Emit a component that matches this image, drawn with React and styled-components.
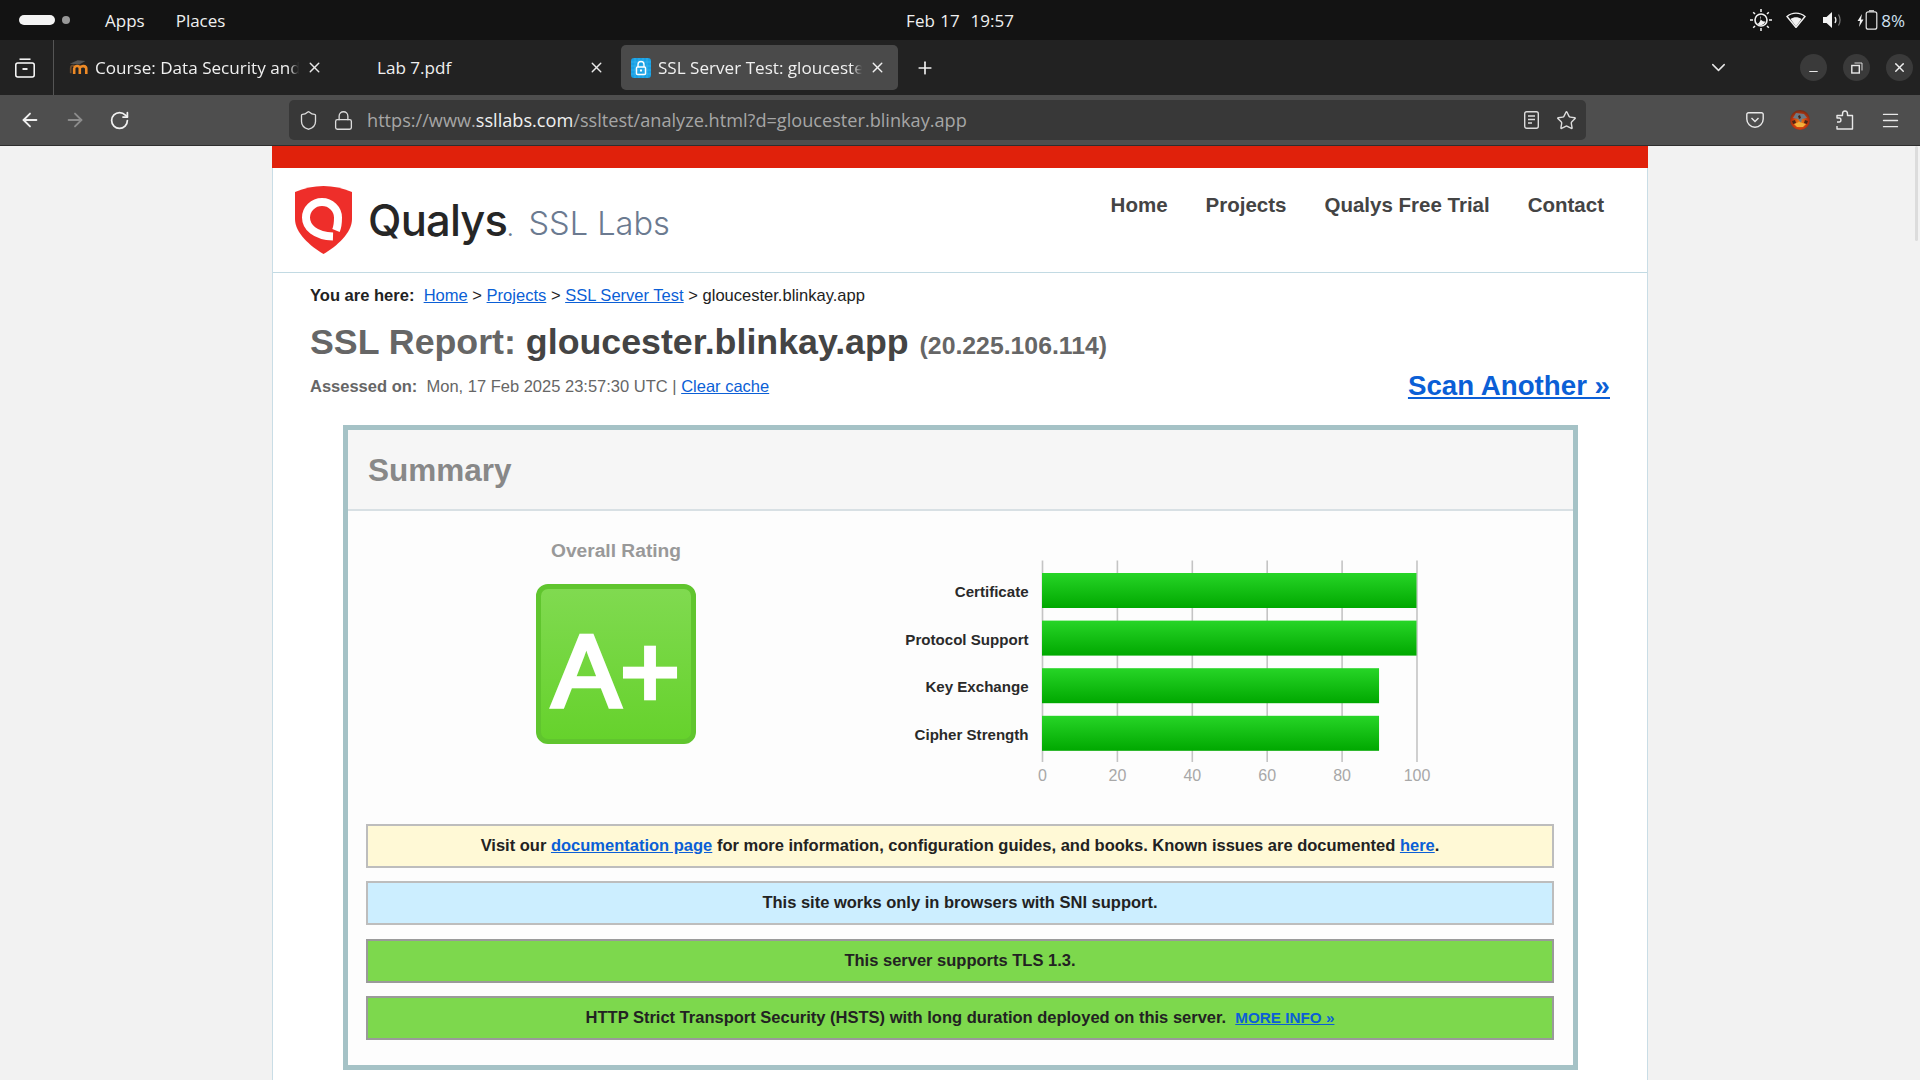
import React from "react";
import styled, { createGlobalStyle } from "styled-components";
import { ArrowLeft, ArrowRight, RotateCw, Shield, Lock, Star, X, Plus, ChevronDown, Minus, Menu } from "lucide-react";

const GlobalStyle = createGlobalStyle`
  html, body { margin: 0; padding: 0; height: 100%; overflow: hidden; background: #f2f2f2; }
  * { box-sizing: border-box; }
`;

const SCORES = [
  { label: "Certificate", value: 100 },
  { label: "Protocol Support", value: 100 },
  { label: "Key Exchange", value: 90 },
  { label: "Cipher Strength", value: 90 },
];

const TICKS = [0, 20, 40, 60, 80, 100];

const ScoreChart = () => {
  const x0 = 157.5;
  const unit = 3.745;
  return (
    <ChartSvg viewBox="0 0 560 232" width="560" height="232">
      <defs>
        <linearGradient id="barFill" x1="0" y1="0" x2="0" y2="1">
          <stop offset="0" stopColor="#27d527" />
          <stop offset="1" stopColor="#00a800" />
        </linearGradient>
      </defs>
      {TICKS.map((t) => (
        <g key={t}>
          <line x1={x0 + t * unit} x2={x0 + t * unit} y1="4.5" y2="206" stroke="#c4c4c4" strokeWidth="1.6" />
          <text x={x0 + t * unit} y="225" textAnchor="middle" fontSize="16" fill="#a8a8a8">{t}</text>
        </g>
      ))}
      {SCORES.map((s, i) => (
        <g key={s.label}>
          <rect x={x0 - 0.5} y={17 + i * 47.6} width={s.value * unit} height="35" fill="url(#barFill)" />
          <text x={143.6} y={41 + i * 47.6} textAnchor="end" fontSize="15.1" fontWeight="700" fill="#2a2a2a">{s.label}</text>
        </g>
      ))}
    </ChartSvg>
  );
};

const ShieldLogo = () => (
  <svg width="57" height="68" viewBox="0 0 57 68">
    <path d="M0 6C9 2 19 0 28.5 0S48 2 57 6V33C57 47 42 60 28.5 68 15 60 0 47 0 33Z" fill="#ee2e2a" />
    <path d="M38 50.5C20 50 11 41 11 31.5A16 15.5 0 1 1 43 31.5C43 37 42.5 41 41 44.5" fill="none" stroke="#fff" strokeWidth="8" />
  </svg>
);

const MoodleIcon = () => (
  <svg width="19" height="18" viewBox="0 0 22 20">
    <path d="M1 5L10 1 19 2 12 6Z" fill="#555" />
    <path d="M2 16V10C2 8 4 7 6 7" fill="none" stroke="#6b4a2c" strokeWidth="2" />
    <path d="M6 17V10M6 10C7 7 12 7 12.5 10V17M12.5 10C14 7 20 7 20 11V17" fill="none" stroke="#ee8a26" strokeWidth="3" />
  </svg>
);

const SslIcon = () => (
  <svg width="20" height="20" viewBox="0 0 20 20">
    <rect width="20" height="20" rx="3" fill="#18a0e4" />
    <path d="M4 0V20M8 0V20M12 0V20M16 0V20M0 4H20M0 8H20M0 12H20M0 16H20" stroke="#3db4ee" strokeWidth="0.7" />
    <path d="M7 9V6.5A3 3 0 0 1 13 6.5V9" fill="none" stroke="#fff" strokeWidth="1.4" />
    <rect x="5.5" y="9" width="9" height="7.5" rx="1" fill="none" stroke="#fff" strokeWidth="1.5" />
    <rect x="9" y="11.5" width="2" height="2" fill="#fff" />
  </svg>
);

const TabsViewIcon = () => (
  <svg width="20" height="20" viewBox="0 0 20 20" fill="none" stroke="#fff" strokeWidth="1.5">
    <path d="M4.5 1.2H15.5" />
    <rect x="0.8" y="5" width="18.4" height="14" rx="2" />
    <path d="M7.5 11H12.5" strokeWidth="1.8" />
  </svg>
);

const SunMoonIcon = () => (
  <svg width="22" height="22" viewBox="0 0 22 22" fill="none" stroke="#f2f2f2" strokeWidth="1.6">
    <circle cx="11" cy="11" r="6" />
    <path d="M10 6.5A5 5 0 0 0 15.5 12.5 5.5 5.5 0 0 1 7 15 6 6 0 0 0 10 6.5Z" fill="#f2f2f2" stroke="none" />
    <path d="M11 0V3M11 19V22M0 11H3M19 11H22M3.2 3.2L5 5M17 17L18.8 18.8M3.2 18.8L5 17M17 5L18.8 3.2" strokeWidth="1.5" />
  </svg>
);

const WifiIcon = () => (
  <svg width="20" height="16" viewBox="0 0 20 16">
    <path d="M1 4.5C6 0 14 0 19 4.5L10 15.5Z" fill="none" stroke="#f2f2f2" strokeWidth="1.4" />
    <path d="M4.5 7C8 4.8 12 4.8 15.5 7L10 14.5Z" fill="#f2f2f2" />
  </svg>
);

const VolumeIcon = () => (
  <svg width="20" height="18" viewBox="0 0 20 18" fill="none">
    <path d="M0 6H3.5L9 1V17L3.5 12H0Z" fill="#f2f2f2" />
    <path d="M12 6C13.2 8 13.2 10 12 12" stroke="#f2f2f2" strokeWidth="1.3" />
    <path d="M15.5 3.5C17.5 7 17.5 11 15.5 14.5" stroke="#777" strokeWidth="1.2" />
  </svg>
);

const BatteryIcon = () => (
  <svg width="21" height="20" viewBox="0 0 21 20" fill="none">
    <path d="M5 4L0.5 11H3L2 17 6.5 9.5H4Z" fill="#f2f2f2" />
    <rect x="9.2" y="1.8" width="10.6" height="17.4" rx="2" stroke="#e6e6e6" strokeWidth="1.2" />
    <path d="M12 0.8H17" stroke="#e6e6e6" strokeWidth="1.2" />
  </svg>
);

const RestoreIcon = () => (
  <svg width="12" height="12" viewBox="0 0 12 12" fill="none" stroke="#e8e8e8">
    <rect x="0.8" y="3.5" width="7.5" height="7.5" strokeWidth="1.4" />
    <path d="M3.5 1H11V8.5" strokeWidth="0.9" />
  </svg>
);

const ReaderIcon = () => (
  <svg width="15" height="18" viewBox="0 0 15 18" fill="none" stroke="#dcdcdc">
    <rect x="0.7" y="0.7" width="13.6" height="16.6" rx="2" strokeWidth="1.4" />
    <path d="M4 5H11M4 8.5H11M4 12H8" strokeWidth="1.4" />
  </svg>
);

const PocketIcon = () => (
  <svg width="18" height="16" viewBox="0 0 18 16" fill="none" stroke="#e8e8e8" strokeWidth="1.4">
    <path d="M0.8 2.5A1.7 1.7 0 0 1 2.5 0.8H15.5A1.7 1.7 0 0 1 17.2 2.5V7A8.2 8.2 0 0 1 0.8 7Z" />
    <path d="M5.5 6L9 9.5 12.5 6" />
  </svg>
);

const AvatarIcon = () => (
  <svg width="20" height="20" viewBox="0 0 20 20">
    <defs>
      <radialGradient id="avatarFill" cx="0.5" cy="0.6" r="0.6">
        <stop offset="0" stopColor="#f08a1c" />
        <stop offset="0.6" stopColor="#c8380f" />
        <stop offset="1" stopColor="#6d2a14" />
      </radialGradient>
    </defs>
    <circle cx="10" cy="10" r="10" fill="url(#avatarFill)" />
    <path d="M6 3L14 4 17 8 12 9 11 13 8 9 3 8Z" fill="#6d7a86" />
    <path d="M4 14L9 12 16 14 13 17H7Z" fill="#f3b13a" />
    <path d="M2 11L5 10 6 13 3 14ZM15 10L18 11 17 14 14 13ZM8 6L10 5 11 8 9 9Z" fill="#4a2414" />
  </svg>
);

const PuzzleIcon = () => (
  <svg width="18" height="20" viewBox="0 0 18 20" fill="none" stroke="#e8e8e8" strokeWidth="1.4">
    <path d="M1 12H3.2C5.5 12 5.5 8 3.2 8H1V5.5H6.5V4C6.5 0 11.5 0 11.5 4V5.5H16.5V19H1V16" strokeLinejoin="round" />
  </svg>
);

const App = () => (
  <Screen>
    <GlobalStyle />
    <SystemBar>
      <SystemLeft>
        <WorkspacePill />
        <WorkspaceDot />
        <SystemMenu>Apps</SystemMenu>
        <SystemMenu>Places</SystemMenu>
      </SystemLeft>
      <Clock>Feb 17&nbsp;&nbsp;19:57</Clock>
      <SystemRight>
        <SunMoonIcon />
        <WifiIcon />
        <VolumeIcon />
        <BatteryIcon />
        <BatteryLabel>8%</BatteryLabel>
      </SystemRight>
    </SystemBar>

    <TabBar>
      <TabsViewButton><TabsViewIcon /></TabsViewButton>
      <Tab $width={281}>
        <MoodleIcon />
        <TabTitle>Course: Data Security and Privacy</TabTitle>
        <X size={17} color="#e8e8e8" />
      </Tab>
      <Tab $width={286} $padRight={16}>
        <PdfTitle>Lab 7.pdf</PdfTitle>
        <X size={17} color="#e8e8e8" />
      </Tab>
      <Tab $active $width={277}>
        <SslIcon />
        <TabTitle>SSL Server Test: gloucester.blinkay.app</TabTitle>
        <X size={17} color="#f0f0f0" />
      </Tab>
      <NewTab><Plus size={20} color="#f0f0f0" /></NewTab>
      <TabList><ChevronDown size={23} color="#e8e8e8" strokeWidth={1.5} /></TabList>
      <WindowButtons>
        <WindowButton><MinimizeGlyph size={13} color="#e8e8e8" /></WindowButton>
        <WindowButton><RestoreIcon /></WindowButton>
        <WindowButton><X size={15} color="#f0f0f0" strokeWidth={2.2} /></WindowButton>
      </WindowButtons>
    </TabBar>

    <Toolbar>
      <NavButtons>
        <ArrowLeft size={22} color="#f0f0f0" />
        <ArrowRight size={22} color="#8c8c8c" />
        <RotateCw size={21} color="#f0f0f0" />
      </NavButtons>
      <UrlBar>
        <Shield size={21} color="#dcdcdc" strokeWidth={1.5} />
        <Lock size={21} color="#dcdcdc" strokeWidth={1.5} />
        <UrlText>https://www.<UrlHost>ssllabs.com</UrlHost>/ssltest/analyze.html?d=gloucester.blinkay.app</UrlText>
        <ReaderIcon />
        <Star size={21} color="#dcdcdc" strokeWidth={1.6} />
      </UrlBar>
      <ToolbarRight>
        <PocketIcon />
        <AvatarIcon />
        <PuzzleIcon />
        <Menu size={21} color="#e8e8e8" strokeWidth={1.5} />
      </ToolbarRight>
    </Toolbar>

    <Viewport>
      <ScrollThumb />
      <Page>
        <RedBand />
        <SiteHeader>
          <Brand>
            <ShieldLogo />
            <BrandName>Qualys<BrandDot>.</BrandDot></BrandName>
            <BrandProduct>SSL Labs</BrandProduct>
          </Brand>
          <SiteNav>
            <SiteNavLink>Home</SiteNavLink>
            <SiteNavLink>Projects</SiteNavLink>
            <SiteNavLink>Qualys Free Trial</SiteNavLink>
            <SiteNavLink>Contact</SiteNavLink>
          </SiteNav>
        </SiteHeader>
        <Main>
          <Breadcrumb>
            <strong>You are here:</strong>&nbsp;&nbsp;<BlueLink>Home</BlueLink> &gt; <BlueLink>Projects</BlueLink> &gt; <BlueLink>SSL Server Test</BlueLink> &gt; gloucester.blinkay.app
          </Breadcrumb>
          <ReportTitle>
            SSL Report: <Host>gloucester.blinkay.app</Host> <Ip>(20.225.106.114)</Ip>
          </ReportTitle>
          <AssessedRow>
            <Assessed>
              <strong>Assessed on:</strong>&nbsp;&nbsp;Mon, 17 Feb 2025 23:57:30 UTC | <BlueLink>Clear cache</BlueLink>
            </Assessed>
            <ScanAnother>Scan Another »</ScanAnother>
          </AssessedRow>
          <SummaryBox>
            <SummaryHeader>Summary</SummaryHeader>
            <SummaryBody>
              <RatingRow>
                <RatingColumn>
                  <RatingLabel>Overall Rating</RatingLabel>
                  <Grade>A+</Grade>
                </RatingColumn>
                <ScoreChart />
              </RatingRow>
              <AlertList>
                <Alert $kind="note">
                  Visit our <BoldLink>documentation page</BoldLink> for more information, configuration guides, and books. Known issues are documented <BoldLink>here</BoldLink>.
                </Alert>
                <Alert $kind="info">This site works only in browsers with SNI support.</Alert>
                <Alert $kind="good">This server supports TLS 1.3.</Alert>
                <Alert $kind="good">
                  HTTP Strict Transport Security (HSTS) with long duration deployed on this server.&nbsp;&nbsp;<MoreInfo>MORE INFO »</MoreInfo>
                </Alert>
              </AlertList>
            </SummaryBody>
          </SummaryBox>
        </Main>
      </Page>
    </Viewport>
  </Screen>
);

const alertColors = {
  note: { bg: "#fff9d6", border: "#bdbdbd" },
  info: { bg: "#cceeff", border: "#bdbdbd" },
  good: { bg: "#7dd84d", border: "#9a9a9a" },
};

const Screen = styled.div`
  width: 1920px;
  height: 1080px;
  display: flex;
  flex-direction: column;
  overflow: hidden;
  font-family: "Liberation Sans", Arial, sans-serif;
`;

const SystemBar = styled.div`
  height: 40px;
  flex: none;
  display: grid;
  grid-template-columns: 1fr auto 1fr;
  align-items: center;
  background: #131313;
  color: #f0f0f0;
  font-family: "Open Sans", "Noto Sans", sans-serif;
  font-size: 17px;
`;

const SystemLeft = styled.div`
  display: flex;
  align-items: center;
  padding-left: 19px;
`;

const WorkspacePill = styled.div`
  width: 36px;
  height: 10px;
  border-radius: 5px;
  background: #f4f4f4;
`;

const WorkspaceDot = styled.div`
  width: 8px;
  height: 8px;
  margin-left: 7px;
  margin-right: 35px;
  border-radius: 50%;
  background: #999;
`;

const SystemMenu = styled.span`
  margin-right: 31px;
`;

const Clock = styled.div`
  text-align: center;
  word-spacing: 1px;
`;

const SystemRight = styled.div`
  display: flex;
  align-items: center;
  justify-content: flex-end;
  gap: 14px;
  padding-right: 15px;

  svg:nth-child(2) {
    margin-right: 3px;
  }
`;

const BatteryLabel = styled.span`
  margin-left: -11px;
  font-size: 17px;
  color: #cfe0f0;
`;

const TabBar = styled.div`
  height: 55px;
  flex: none;
  display: flex;
  align-items: center;
  background: #222222;
  color: #f0f0f0;
  font-family: "Open Sans", "Noto Sans", sans-serif;
  font-size: 17.1px;
`;

const TabsViewButton = styled.div`
  width: 54px;
  height: 55px;
  flex: none;
  display: flex;
  align-items: center;
  justify-content: center;
  padding-right: 3px;
  border-right: 1px solid #555;
`;

const Tab = styled.div`
  width: ${(p) => p.$width}px;
  height: 45px;
  flex: none;
  display: flex;
  align-items: center;
  gap: 7px;
  padding: 0 ${(p) => p.$padRight ?? 12}px 0 ${(p) => (p.$active ? 10 : 15)}px;
  border-radius: 5px;
  background: ${(p) => (p.$active ? "#4a4a4a" : "transparent")};
`;

const TabTitle = styled.span`
  flex: 1;
  min-width: 0;
  white-space: nowrap;
  overflow: hidden;
  mask-image: linear-gradient(to left, transparent, #000 10px);
`;

const PdfTitle = styled.span`
  flex: 1;
  padding-left: 27px;
`;

const NewTab = styled.div`
  width: 54px;
  flex: none;
  display: flex;
  justify-content: center;
`;

const TabList = styled.div`
  margin-left: auto;
  margin-right: 70px;
  display: flex;
`;

const WindowButtons = styled.div`
  display: flex;
  gap: 16px;
  padding-right: 7px;
`;

const WindowButton = styled.div`
  width: 27px;
  height: 27px;
  display: flex;
  align-items: center;
  justify-content: center;
  border-radius: 50%;
  background: #3a3a3a;
`;

const MinimizeGlyph = styled(Minus)`
  margin-top: 7px;
`;

const Toolbar = styled.div`
  height: 50px;
  flex: none;
  display: flex;
  align-items: center;
  background: #4e4e4e;
`;

const NavButtons = styled.div`
  width: 289px;
  flex: none;
  display: flex;
  align-items: center;
  gap: 23px;
  padding-left: 19px;
`;

const UrlBar = styled.div`
  width: 1297px;
  height: 40px;
  flex: none;
  display: flex;
  align-items: center;
  gap: 14px;
  padding: 0 9px 0 9px;
  border-radius: 5px;
  background: #383838;

  svg:nth-last-child(2) {
    margin-right: 3px;
  }
`;

const UrlText = styled.div`
  flex: 1;
  margin-left: -1px;
  color: #a6a6a6;
  font-family: "Open Sans", "Noto Sans", sans-serif;
  font-size: 18.15px;
  white-space: nowrap;
`;

const UrlHost = styled.span`
  color: #f0f0f0;
`;

const ToolbarRight = styled.div`
  flex: 1;
  display: flex;
  align-items: center;
  justify-content: flex-end;
  gap: 26px;
  padding-right: 19px;
`;

const Viewport = styled.div`
  position: relative;
  flex: 1;
  min-height: 0;
  overflow: hidden;
  background: #f2f2f2;
  border-top: 1px solid #2e2e2e;
`;

const ScrollThumb = styled.div`
  position: absolute;
  top: 0;
  right: 2px;
  width: 3px;
  height: 95px;
  border-radius: 2px;
  background: #dcdcdc;
`;

const Page = styled.div`
  width: 1376px;
  margin: 0 auto;
  background: #fff;
  border-left: 1px solid #c9dde6;
  border-right: 1px solid #c9dde6;
  height: 100%;
`;

const RedBand = styled.div`
  height: 22px;
  margin: 0 -1px;
  background: #e0210b;
`;

const SiteHeader = styled.header`
  height: 105px;
  display: flex;
  justify-content: space-between;
  align-items: flex-start;
  padding: 18px 43px 0 22px;
  border-bottom: 1px solid #c2dae3;
`;

const Brand = styled.div`
  display: flex;
  align-items: center;
  height: 68px;
`;

const BrandName = styled.span`
  margin-left: 16px;
  font-family: Inter, Lato, sans-serif;
  font-size: 43.5px;
  font-weight: 500;
  letter-spacing: -0.8px;
  color: #262626;
`;

const BrandDot = styled.span`
  font-size: 20px;
  color: #6b7a90;
`;

const BrandProduct = styled.span`
  margin-left: 16px;
  margin-top: 6px;
  font-family: Inter, Lato, sans-serif;
  font-size: 32.6px;
  font-weight: 300;
  color: #6b7a90;
`;

const SiteNav = styled.nav`
  display: flex;
  gap: 38px;
  margin-top: 7px;
`;

const SiteNavLink = styled.a`
  font-size: 20.5px;
  font-weight: 700;
  color: #444;
`;

const Main = styled.main`
  padding: 13px 37px 0 37px;
`;

const Breadcrumb = styled.div`
  font-size: 16.55px;
  line-height: 20px;
  color: #222;
`;

const BlueLink = styled.a`
  color: #0b5fd6;
  text-decoration: underline;
`;

const ReportTitle = styled.h1`
  margin: 16px 0 0;
  font-size: 35.75px;
  line-height: 40px;
  font-weight: 700;
  color: #666;
`;

const Host = styled.span`
  color: #444;
`;

const Ip = styled.span`
  margin-left: 1px;
  font-size: 24.8px;
`;

const AssessedRow = styled.div`
  display: flex;
  justify-content: space-between;
  align-items: center;
  height: 32px;
  margin-top: 4px;
`;

const Assessed = styled.div`
  font-size: 16.5px;
  color: #666;
`;

const ScanAnother = styled.a`
  font-size: 27.7px;
  font-weight: 700;
  color: #0b5fd6;
  text-decoration: underline;
`;

const SummaryBox = styled.section`
  width: 1235px;
  margin: 23px 0 0 33px;
  border: 5px solid #a5c2c6;
`;

const SummaryHeader = styled.h2`
  height: 81px;
  margin: 0;
  padding: 2px 0 0 20px;
  display: flex;
  align-items: center;
  font-size: 31.5px;
  font-weight: 700;
  color: #888;
  background: #f6f6f6;
  border-bottom: 2px solid #d8e0e4;
`;

const SummaryBody = styled.div`
  padding-bottom: 25px;
  background: #fdfdfd;
`;

const RatingRow = styled.div`
  height: 313px;
  display: flex;
  align-items: flex-start;
`;

const RatingColumn = styled.div`
  width: 536px;
  flex: none;
  display: flex;
  flex-direction: column;
  align-items: center;
  padding-top: 29px;
`;

const RatingLabel = styled.div`
  font-size: 19.2px;
  line-height: 22px;
  font-weight: 700;
  color: #999;
`;

const Grade = styled.div`
  width: 160px;
  height: 160px;
  margin-top: 22px;
  padding-top: 16px;
  display: flex;
  align-items: center;
  justify-content: center;
  border: 5px solid #60c52e;
  border-radius: 12px;
  background: linear-gradient(#80da50, #66d22c);
  color: #fff;
  font-size: 102px;
  font-weight: 400;
  -webkit-text-stroke: 4.5px #fff;
`;

const ChartSvg = styled.svg`
  flex: none;
  margin: 45px 0 0 1px;
  font-family: "Liberation Sans", Arial, sans-serif;
`;

const AlertList = styled.div`
  display: flex;
  flex-direction: column;
  gap: 13.3px;
  padding: 0 19px 0 18px;
`;

const Alert = styled.div`
  height: 44px;
  padding-bottom: 1px;
  display: flex;
  align-items: center;
  justify-content: center;
  white-space: pre-wrap;
  border: 2px solid ${(p) => alertColors[p.$kind].border};
  background: ${(p) => alertColors[p.$kind].bg};
  font-size: 16.5px;
  font-weight: 700;
  color: #222;
`;

const BoldLink = styled.a`
  color: #0b5fd6;
  text-decoration: underline;
`;

const MoreInfo = styled.a`
  font-size: 15.25px;
  color: #0b5fd6;
  text-decoration: underline;
`;

export default App;
